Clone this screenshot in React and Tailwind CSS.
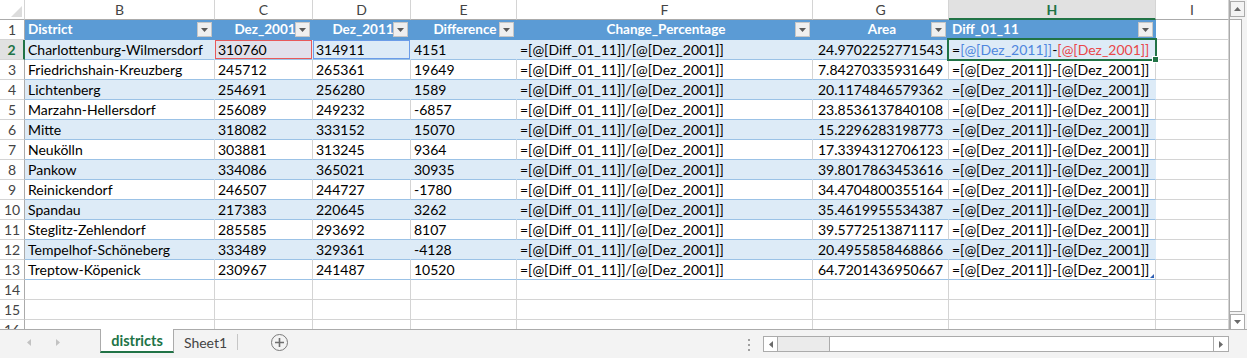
import React from "react";

const rows = [
  ["Charlottenburg-Wilmersdorf", "310760", "314911", "4151", "24.9702252771543"],
  ["Friedrichshain-Kreuzberg", "245712", "265361", "19649", "7.84270335931649"],
  ["Lichtenberg", "254691", "256280", "1589", "20.1174846579362"],
  ["Marzahn-Hellersdorf", "256089", "249232", "-6857", "23.8536137840108"],
  ["Mitte", "318082", "333152", "15070", "15.2296283198773"],
  ["Neukölln", "303881", "313245", "9364", "17.3394312706123"],
  ["Pankow", "334086", "365021", "30935", "39.8017863453616"],
  ["Reinickendorf", "246507", "244727", "-1780", "34.4704800355164"],
  ["Spandau", "217383", "220645", "3262", "35.4619955534387"],
  ["Steglitz-Zehlendorf", "285585", "293692", "8107", "39.5772513871117"],
  ["Tempelhof-Schöneberg", "333489", "329361", "-4128", "20.4955858468866"],
  ["Treptow-Köpenick", "230967", "241487", "10520", "64.7201436950667"],
];

const W = [
  "w-[190px]",
  "w-[98px]",
  "w-[98px]",
  "w-[106px]",
  "w-[296px]",
  "w-[136px]",
  "w-[207px]",
  "w-[73px]",
];
const LETTERS = ["B", "C", "D", "E", "F", "G", "H", "I"];
const HEADERS = ["District", "Dez_2001", "Dez_2011", "Difference", "Change_Percentage", "Area", "Diff_01_11"];
const F_FORMULA = "=[@[Diff_01_11]]/[@[Dez_2001]]";
const H_FORMULA = "=[@[Dez_2011]]-[@[Dez_2001]]";

function DropBtn() {
  return (
    <div className="absolute right-[2px] top-[2px] w-[15px] h-[15px] bg-[#efefef] border border-[#c6c6c6] flex items-center justify-center">
      <svg width="7" height="4" viewBox="0 0 7 4">
        <path d="M0 0H7L3.5 4Z" fill="#5a5a5a" />
      </svg>
    </div>
  );
}

function RowHead({ n, active }) {
  return (
    <div
      className={
        "w-[25px] h-5 shrink-0 box-border border-b border-[#d4d4d4] flex items-center justify-center text-[14px] " +
        (active
          ? "bg-[#e1e1e1] text-[#217346] font-bold border-r-2 border-r-[#217346]"
          : "bg-white text-[#444] border-r border-r-[#ababab]")
      }
    >
      {n}
    </div>
  );
}

function Cell({ i, className = "", children }) {
  return (
    <div
      className={
        W[i] +
        " h-5 shrink-0 box-border border-r border-b flex items-center pl-[3px] whitespace-nowrap overflow-hidden relative " +
        className
      }
    >
      {children}
    </div>
  );
}

export default function App() {
  return (
    <div className="w-[1247px] h-[358px] bg-white overflow-hidden font-['Lato',sans-serif] text-[14px] text-black flex flex-col">
      <div className="flex h-[330px] border-b border-[#ababab]">
        {/* grid */}
        <div className="flex flex-col w-[1229px] overflow-hidden">
          {/* column letters */}
          <div className="flex h-5 shrink-0">
            <div className="w-[25px] h-5 shrink-0 box-border border-r border-r-[#d4d4d4] border-b border-b-[#ababab] bg-white relative">
              <svg className="absolute right-[2px] bottom-[2px]" width="11" height="11" viewBox="0 0 11 11">
                <path d="M11 0V11H0Z" fill="#dcdcdc" />
              </svg>
            </div>
            {LETTERS.map((l, i) => (
              <div
                key={l}
                className={
                  W[i] +
                  " h-5 shrink-0 box-border flex items-center justify-center text-[14px] " +
                  (l === "H"
                    ? "bg-[#e1e1e1] text-[#217346] font-bold border-b-2 border-b-[#217346] border-r border-r-[#d4d4d4]"
                    : "bg-white text-[#444] border-b border-b-[#ababab] border-r border-r-[#d4d4d4]")
                }
              >
                {l}
              </div>
            ))}
          </div>

          {/* table header row */}
          <div className="flex h-5 shrink-0">
            <RowHead n={1} />
            {HEADERS.map((h, i) => (
              <Cell
                key={h}
                i={i}
                className={
                  "bg-[#5b9bd5] border-[#5b9bd5] text-white font-bold text-[13.5px] " +
                  (i === 0 || i === 6 ? "justify-start" : "justify-center pl-0")
                }
              >
                <span>{h}</span>
                <DropBtn />
              </Cell>
            ))}
            <Cell i={7} className="border-[#d4d4d4]" />
          </div>

          {/* data rows */}
          {rows.map((r, ri) => {
            const band = ri % 2 === 0;
            const rowCls = band
              ? "bg-[#ddebf7] border-r-[#ddebf7] border-b-[#9bc2e6]"
              : "bg-white border-r-[#d4d4d4] border-b-[#9bc2e6]";
            const first = ri === 0;
            const last = ri === rows.length - 1;
            return (
              <div key={ri} className="flex h-5 shrink-0">
                <RowHead n={ri + 2} active={first} />
                <Cell i={0} className={rowCls}>{r[0]}</Cell>
                <Cell i={1} className={rowCls + (first ? " bg-[#e2e0eb]" : "")}>
                  {r[1]}
                  {first && (
                    <div className="absolute -left-px -top-px w-[99px] h-[21px] border-2 border-[#e8595a] z-10" />
                  )}
                </Cell>
                <Cell i={2} className={rowCls + (first ? " bg-[#d3e1f5]" : "")}>
                  {r[2]}
                  {first && (
                    <div className="absolute -left-px -top-px w-[99px] h-[21px] border-2 border-[#6b9ce8] z-10" />
                  )}
                </Cell>
                <Cell i={3} className={rowCls}>{r[3]}</Cell>
                <Cell i={4} className={rowCls}>{F_FORMULA}</Cell>
                <Cell i={5} className={rowCls + " pl-[5px]"}>{r[4]}</Cell>
                <Cell i={6} className={rowCls + (first ? " overflow-visible" : "")}>
                  {first ? (
                    <>
                      <span>=</span>
                      <span className="text-[#4f86dd]">[@[Dez_2011]]</span>
                      <span>-</span>
                      <span className="text-[#e8474a]">[@[Dez_2001]]</span>
                      <div className="absolute -left-[2px] -top-[2px] w-[210px] h-[23px] border-2 border-[#217346] z-10" />
                      <div className="absolute -right-[4px] -bottom-[4px] w-[7px] h-[7px] bg-[#217346] border border-white z-20" />
                    </>
                  ) : (
                    H_FORMULA
                  )}
                  {last && (
                    <svg className="absolute right-[1px] bottom-[1px]" width="4" height="4" viewBox="0 0 4 4">
                      <path d="M4 0V4H0Z" fill="#2f5fb3" />
                    </svg>
                  )}
                </Cell>
                <Cell i={7} className="border-[#d4d4d4] bg-white" />
              </div>
            );
          })}

          {/* empty rows */}
          {[14, 15, 16].map((n) => (
            <div key={n} className="flex h-5 shrink-0">
              <RowHead n={n} />
              {W.map((w, i) => (
                <Cell key={i} i={i} className="border-[#d4d4d4] bg-white" />
              ))}
            </div>
          ))}
        </div>

        {/* vertical scrollbar */}
        <div className="w-[18px] h-full bg-[#f3f3f3] border-l border-[#ababab] flex flex-col items-start pt-[1px]">
          <div className="w-[15px] h-[16px] bg-[#f3f3f3] border border-[#ababab] flex items-center justify-center">
            <svg width="7" height="4" viewBox="0 0 7 4">
              <path d="M0 4H7L3.5 0Z" fill="#6a6a6a" />
            </svg>
          </div>
          <div className="w-[12px] flex-1 bg-white border border-[#ababab] border-l-0 mt-[2px] mb-[2px]" />
          <div className="w-[15px] h-[16px] bg-white border border-[#ababab] flex items-center justify-center mb-[-1px]">
            <svg width="7" height="4" viewBox="0 0 7 4">
              <path d="M0 0H7L3.5 4Z" fill="#6a6a6a" />
            </svg>
          </div>
        </div>
      </div>

      {/* bottom bar */}
      <div className="flex-1 bg-[#f3f3f3] flex items-start">
        <div className="w-[100px] h-[24px] flex items-center">
          <svg className="ml-[27px]" width="4" height="7" viewBox="0 0 4 7">
            <path d="M4 0V7L0 3.5Z" fill="#c2c2c2" />
          </svg>
          <svg className="ml-[25px]" width="4" height="7" viewBox="0 0 4 7">
            <path d="M0 0V7L4 3.5Z" fill="#c2c2c2" />
          </svg>
        </div>
        <div className="w-[74px] h-[24px] bg-white border-l border-r border-[#ababab] border-b-2 border-b-[#217346] flex items-center justify-center text-[#217346] font-bold text-[14.5px] box-border -mt-px pt-px">
          districts
        </div>
        <div className="w-[63px] h-[24px] flex items-center justify-center text-[#444] text-[14px]">Sheet1</div>
        <div className="w-px h-[16px] bg-[#c6c6c6] mt-[4px]" />
        <div className="ml-[33px] mt-[4px] w-[17px] h-[17px] rounded-full border border-[#7a7a7a] flex items-center justify-center">
          <svg width="9" height="9" viewBox="0 0 9 9">
            <path d="M4.5 0V9M0 4.5H9" stroke="#6e6e6e" strokeWidth="1.6" />
          </svg>
        </div>
        <div className="flex-1" />
        <div className="flex flex-col gap-[3px] mt-[9px] mr-[13px]">
          <div className="w-[2px] h-[2px] bg-[#a0a0a0]" />
          <div className="w-[2px] h-[2px] bg-[#a0a0a0]" />
          <div className="w-[2px] h-[2px] bg-[#a0a0a0]" />
        </div>
        <div className="mt-[6px] w-[466px] h-[16px] flex border border-[#ababab] bg-[#ebebeb]">
          <div className="w-[14px] h-full bg-white border-r border-[#ababab] flex items-center justify-center">
            <svg width="4" height="7" viewBox="0 0 4 7">
              <path d="M4 0V7L0 3.5Z" fill="#6a6a6a" />
            </svg>
          </div>
          <div className="w-[51px] h-full" />
          <div className="flex-1 h-full bg-white border-l border-r border-[#ababab]" />
          <div className="w-[14px] h-full bg-white flex items-center justify-center">
            <svg width="4" height="7" viewBox="0 0 4 7">
              <path d="M0 0V7L4 3.5Z" fill="#6a6a6a" />
            </svg>
          </div>
        </div>
        <div className="w-[18px]" />
      </div>
    </div>
  );
}
